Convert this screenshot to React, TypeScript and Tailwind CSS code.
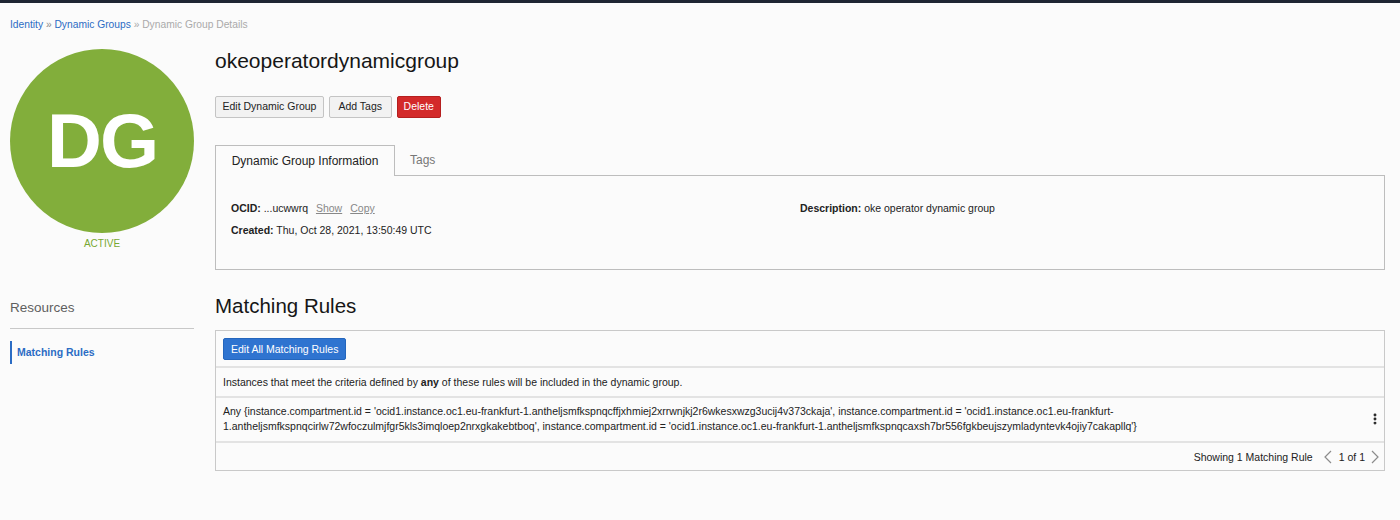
import { MoreVertical } from "lucide-react";

function Breadcrumb() {
  return (
    <div className="px-[10px] pt-[15px] text-[10.25px] leading-[13px]">
      <a className="text-[#2b6cc4]">Identity</a>
      <span className="text-[#8a8a8a]"> » </span>
      <a className="text-[#2b6cc4]">Dynamic Groups</a>
      <span className="text-[#aaaaaa]"> » Dynamic Group Details</span>
    </div>
  );
}

function Sidebar() {
  return (
    <aside className="w-[184px] shrink-0">
      <div className="mt-[18px] flex h-[184px] w-[184px] items-center justify-center rounded-full bg-[#82ae3b]">
        <span className="text-[76px] font-bold leading-none tracking-[-2px] text-white">
          DG
        </span>
      </div>
      <div className="mt-[5px] text-center text-[10px] leading-[12px] text-[#77a832]">ACTIVE</div>

      <div className="mt-[50px] text-[13.5px] leading-[16px] font-light text-[#5f5f5f]">Resources</div>
      <div className="mt-[12px] h-px bg-[#c8c8c8]" />
      <div className="mt-[12px] border-l-2 border-[#2b6cc4] py-[4px] pl-[5px] text-[10.5px] leading-[15px] font-bold text-[#2b6cc4]">
        Matching Rules
      </div>
    </aside>
  );
}

function InfoPanel() {
  return (
    <div>
      <div className="flex h-[30px] items-end">
        <div className="relative -mb-px flex h-[31px] w-[180px] items-center justify-center border border-b-0 border-[#bdbdbd] bg-[#fbfbfb] text-[12px] text-[#222]">
          Dynamic Group Information
        </div>
        <div className="flex h-[30px] items-center px-[15px] text-[12px] text-[#777]">Tags</div>
      </div>
      <div className="h-[95px] border border-[#bdbdbd] px-[15px] pt-[26px] text-[10.5px] leading-[13px] text-[#222]">
        <div className="grid grid-cols-2">
          <div>
            <div>
              <b>OCID:</b> ...ucwwrq{" "}
              <span className="ml-[5px] text-[#888] underline">Show</span>
              <span className="ml-[8px] text-[#888] underline">Copy</span>
            </div>
            <div className="mt-[9px]">
              <b>Created:</b> Thu, Oct 28, 2021, 13:50:49 UTC
            </div>
          </div>
          <div>
            <b>Description:</b> oke operator dynamic group
          </div>
        </div>
      </div>
    </div>
  );
}

function Chevron({ dir }: { dir: "left" | "right" }) {
  return (
    <svg width="8" height="14" viewBox="0 0 8 14" fill="none" stroke="#8c8c8c" strokeWidth="1.2">
      {dir === "left" ? <path d="M7 1 L1 7 L7 13" /> : <path d="M1 1 L7 7 L1 13" />}
    </svg>
  );
}

function RulesTable() {
  return (
    <div className="mt-[11px] border border-[#c9c9c9] text-[10.5px] leading-[14px] text-[#222]">
      <div className="border-b-2 border-[#e3e3e3] px-[7px] pb-[6px] pt-[7px]">
        <button className="h-[22px] rounded-[2px] border border-[#2466bd] bg-[#2f74d0] px-[7px] text-[10.5px] text-white">
          Edit All Matching Rules
        </button>
      </div>
      <div className="border-b-2 border-[#e3e3e3] px-[7px] py-[7px]">
        Instances that meet the criteria defined by <b>any</b> of these rules will be included in
        the dynamic group.
      </div>
      <div className="flex items-center border-b-2 border-[#e3e3e3] pb-[7px] pl-[7px] pr-[2px] pt-[6px] leading-[15px]">
        <div className="flex-1">
          Any {"{"}instance.compartment.id = 'ocid1.instance.oc1.eu-frankfurt-1.antheljsmfkspnqcffjxhmiej2xrrwnjkj2r6wkesxwzg3ucij4v373ckaja',
          instance.compartment.id = 'ocid1.instance.oc1.eu-frankfurt-
          <br />
          1.antheljsmfkspnqcirlw72wfoczulmjfgr5kls3imqloep2nrxgkakebtboq', instance.compartment.id =
          'ocid1.instance.oc1.eu-frankfurt-1.antheljsmfkspnqcaxsh7br556fgkbeujszymladyntevk4ojiy7cakapllq'{"}"}
        </div>
        <MoreVertical className="h-[14px] w-[14px] text-[#222]" strokeWidth={3} />
      </div>
      <div className="flex h-[27px] items-center justify-end pr-[5px]">
        <span>Showing 1 Matching Rule</span>
        <span className="ml-[11px] flex"><Chevron dir="left" /></span>
        <span className="ml-[7px] mr-[6px]">1 of 1</span>
        <span className="flex"><Chevron dir="right" /></span>
      </div>
    </div>
  );
}

export default function App() {
  return (
    <div className="min-h-[520px] bg-[#fbfbfb] font-['Liberation_Sans',Arial,sans-serif]">
      <div className="h-[3px] bg-[#1e2533]" />
      <Breadcrumb />
      <div className="flex gap-[21px] px-[10px]">
        <Sidebar />
        <main className="flex-1 pr-[5px]">
          <h1 className="mt-[18px] text-[21px] leading-[24px] text-[#161616]">okeoperatordynamicgroup</h1>
          <div className="mt-[23px] flex gap-[5px]">
            <button className="h-[22px] rounded-[2px] border border-[#c4c4c4] bg-[#f2f2f2] px-[6.5px] text-[10.5px] text-[#222]">
              Edit Dynamic Group
            </button>
            <button className="h-[22px] rounded-[2px] border border-[#c4c4c4] bg-[#f2f2f2] px-[8.5px] text-[10.5px] text-[#222]">
              Add Tags
            </button>
            <button className="h-[22px] rounded-[2px] border border-[#b51f1f] bg-[#d32a2a] px-[6px] text-[10.5px] text-white">
              Delete
            </button>
          </div>
          <div className="mt-[27px]">
            <InfoPanel />
          </div>
          <h2 className="mt-[23px] text-[20.5px] leading-[26px] text-[#161616]">Matching Rules</h2>
          <RulesTable />
        </main>
      </div>
    </div>
  );
}
